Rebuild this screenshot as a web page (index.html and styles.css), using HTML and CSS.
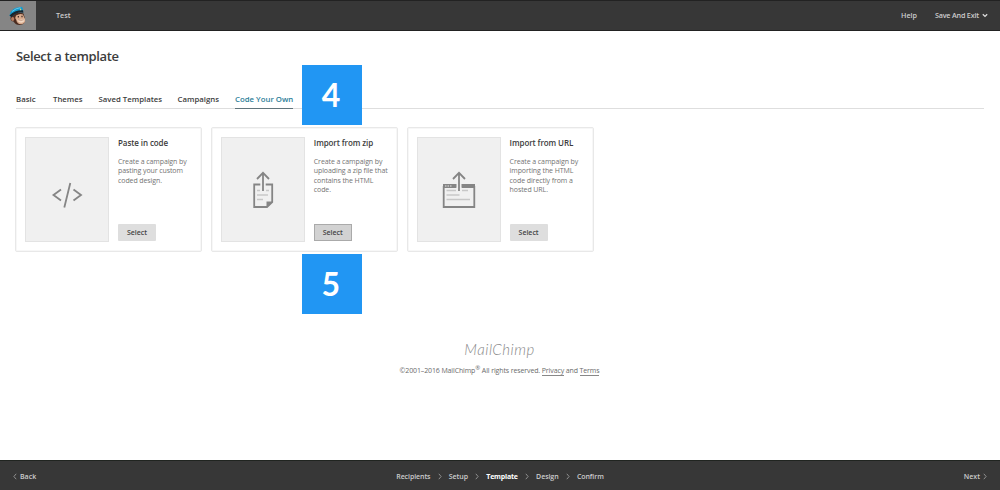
FILE: index.html
```html
<!DOCTYPE html>
<html lang="en">
<head>
<meta charset="utf-8">
<title>Select a template</title>
<link rel="stylesheet" href="styles.css">
</head>
<body>
<div class="app">
  <header class="topbar">
    <a class="logo">
      <svg width="20" height="20" viewBox="0 0 20 20">
        <path d="M4 9 Q2.200 10.500 2.500 13 Q3 15.500 5.500 15.500 Q8 19.600 12.500 19 Q17.500 18 17 12.500 L15.500 7.500 Q10 5.500 4 9Z" fill="#4b2c20"/>
        <path d="M8 9.500 Q12 7 15 8.500 L16.500 12 Q18.500 16.500 14.500 18 Q9 19 8.300 14 Q6.500 11.500 8 9.500Z" fill="#d8aa8c"/>
        <ellipse cx="4.700" cy="13" rx="1.600" ry="1.900" fill="#b57c60"/>
        <path d="M9 13 Q13 15 16.500 12.300 Q17 16.500 13.500 16.800 Q9.800 16.800 9 13Z" fill="#f2d9c4"/>
        <path d="M9.700 13.700 Q13 15.800 16.200 13.500" fill="none" stroke="#a5735c" stroke-width=".5"/>
        <path d="M10.300 10 V11.500 M14 9.700 V11.200" stroke="#2a1b18" stroke-width="1.100"/>
        <path d="M1.500 9.500 Q2.500 4 8 1.800 L14 .8 Q15.700 3 15.200 6.500 Q9.500 4.500 3.500 11Z" fill="#129bd0"/>
        <path d="M1.500 9.500 Q6.500 4 15 4.300 L15.400 6.800 Q8.500 5.500 3.500 11.200Z" fill="#17252e"/>
        <path d="M4 5.500 Q8 2 12.500 1.700" fill="none" stroke="#66c8e8" stroke-width="1"/>
        <path d="M12 2.300 L13.500 3.400 L12 4.500Z" fill="#e5cb68"/>
      </svg>
    </a>
    <span class="campaign">Test</span>
    <nav class="topnav">
      <a class="help">Help</a>
      <a class="save">Save And Exit</a>
      <svg class="caret" width="6" height="5" viewBox="0 0 6 5"><path d="M.8 1.200 L3 3.400 L5.200 1.200" fill="none" stroke="#ddd" stroke-width="1.300"/></svg>
    </nav>
  </header>

  <main class="content">
    <h1 class="title">Select a template</h1>
    <nav class="tabs">
      <a class="tab tab-basic">Basic</a>
      <a class="tab tab-themes">Themes</a>
      <a class="tab tab-saved">Saved Templates</a>
      <a class="tab tab-campaigns">Campaigns</a>
      <a class="tab active">Code Your Own</a>
      <span class="marker marker-four">4</span>
    </nav>

    <section class="cards">
      <article class="card">
        <div class="thumb">
          <svg width="84" height="105" viewBox="0 0 84 105" fill="none" stroke="#858585" stroke-width="1.800">
            <path d="M36 52.500 L28.500 58 L36 63.500 M48.500 52.500 L56 58 L48.500 63.500 M45.300 46 L39.300 70.500"/>
          </svg>
        </div>
        <div class="info">
          <h2 class="name">Paste in code</h2>
          <p class="desc">Create a campaign by<br>pasting your custom<br>coded design.</p>
          <button class="select">Select</button>
        </div>
      </article>
      <article class="card">
        <div class="thumb">
          <svg width="84" height="105" viewBox="0 0 84 105" fill="none" stroke="#858585" stroke-width="1.800">
            <path d="M42 54 V35.800 M36 42 L42 35.800 L48 42 M39.300 47.500 H33.200 V70 H46 L51.200 65 V47.500 H44.700"/>
            <path d="M45.500 70.500 V64.500 H51.700Z" fill="#858585" stroke="none"/>
            <path d="M36 53.500 H39 M45 53.500 H48 M36 58 H47 M36 62.500 H42" stroke="#c7c7c7" stroke-width="1.500"/>
          </svg>
        </div>
        <div class="info">
          <h2 class="name">Import from zip</h2>
          <p class="desc">Create a campaign by<br>uploading a zip file that<br>contains the HTML<br>code.</p>
          <button class="select focused">Select</button>
        </div>
        <span class="marker marker-five">5</span>
      </article>
      <article class="card">
        <div class="thumb">
          <svg width="84" height="105" viewBox="0 0 84 105" fill="none" stroke="#858585" stroke-width="1.800">
            <path d="M42 54 V35.800 M36 42 L42 35.800 L48 42 M39 50 H26.700 V70 H57.300 V50 H45"/>
            <path d="M26 47 H39.500 V50.700 H26Z M44.500 47 H58 V50.700 H44.500Z" fill="#858585" stroke="none"/>
            <path d="M28 49 H34.500" stroke="#e5e5e5" stroke-width="1.200" stroke-dasharray="1.500 1"/>
            <path d="M29.500 53.500 H39 M45 53.500 H51 M29.500 58 H42.500 M29.500 62.500 H53" stroke="#c7c7c7" stroke-width="1.500"/>
          </svg>
        </div>
        <div class="info">
          <h2 class="name">Import from URL</h2>
          <p class="desc">Create a campaign by<br>importing the HTML<br>code directly from a<br>hosted URL.</p>
          <button class="select">Select</button>
        </div>
      </article>
    </section>

    <footer class="legal">
      <div class="wordmark">MailChimp</div>
      <div class="copyright">©2001–2016 MailChimp<sup>®</sup> All rights reserved. <a>Privacy</a> and <a>Terms</a></div>
    </footer>
  </main>

  <footer class="wizard">
    <a class="back"><svg width="4" height="7" viewBox="0 0 4 7"><path d="M3.200 .8 L.9 3.500 L3.200 6.200"/></svg>Back</a>
    <div class="steps">
      <span>Recipients</span><svg width="4" height="7" viewBox="0 0 4 7"><path d="M.8 .8 L3.100 3.500 L.8 6.200"/></svg>
      <span>Setup</span><svg width="4" height="7" viewBox="0 0 4 7"><path d="M.8 .8 L3.100 3.500 L.8 6.200"/></svg>
      <span class="current">Template</span><svg width="4" height="7" viewBox="0 0 4 7"><path d="M.8 .8 L3.100 3.500 L.8 6.200"/></svg>
      <span>Design</span><svg width="4" height="7" viewBox="0 0 4 7"><path d="M.8 .8 L3.100 3.500 L.8 6.200"/></svg>
      <span>Confirm</span>
    </div>
    <a class="next">Next<svg width="4" height="7" viewBox="0 0 4 7"><path d="M.8 .8 L3.100 3.500 L.8 6.200"/></svg></a>
  </footer>
</div>
</body>
</html>
```
FILE: styles.css
```css
* { box-sizing: border-box; }
body { margin: 0; background: #fff; font-family: "Open Sans", sans-serif; color: #3c3c3c; }
svg { display: block; flex: none; }
.app { width: 1000px; height: 490px; display: flex; flex-direction: column; overflow: hidden; }

.topbar { height: 31px; flex: none; display: flex; align-items: center; background: #373737; border-top: 1px solid #222; border-bottom: 1px solid #222; font-size: 7.200px; line-height: 11px; font-weight: 600; color: #ccc; white-space: nowrap; }
.logo { width: 36px; height: 29px; display: flex; align-items: center; justify-content: center; background: #858585; }
.campaign { margin-left: 20px; }
.topnav { margin-left: auto; display: flex; align-items: center; padding-right: 12px; }
.help { width: 34px; }
.save { width: 47px; letter-spacing: -.2px; }

.content { flex: 1; padding: 0 16px 0 15px; display: flex; flex-direction: column; }
.title { margin: 16px 0 0 1px; font-size: 13px; line-height: 18px; font-weight: 600; letter-spacing: -.35px; }
.tabs { position: relative; height: 17px; margin-top: 27px; margin-left: 1px; display: flex; border-bottom: 1px solid #dedede; font-size: 7.800px; font-weight: 600; line-height: 15px; white-space: nowrap; }
.tab { height: 17px; }
.tab-basic { width: 37px; }
.tab-themes { width: 45.500px; }
.tab-saved { width: 79px; }
.tab-campaigns { width: 57.500px; }
.active { color: #2c7e99; border-bottom: 1px solid #60747b; }
.marker { position: absolute; width: 60px; height: 60px; padding-right: 2px; background: #2196f3; color: #fff; font: 700 32px/60px Lato, sans-serif; text-align: center; }
.marker-four { left: 286px; top: -27px; }
.marker-five { left: 90px; top: 126px; }

.cards { display: flex; gap: 8.800px; margin-top: 18px; }
.card { position: relative; width: 187px; height: 125px; padding: 9px; display: flex; gap: 9px; border: 1px solid #e8e8e8; border-radius: 2px; box-shadow: inset 0 0 0 1px #f7f7f7; }
.thumb { width: 84px; height: 105px; flex: none; background: #f0f0f0; box-shadow: inset 0 0 0 1px #e3e3e3; }
.info { display: flex; flex-direction: column; align-items: flex-start; white-space: nowrap; }
.name { margin: 0; font-size: 8px; font-weight: 600; line-height: 11px; letter-spacing: -.09px; }
.desc { margin: 9px 0 0; font-size: 7px; line-height: 9.300px; letter-spacing: -.09px; color: #737373; }
.select { width: 38px; height: 17px; margin: auto 0 1px; padding: 0; border: 0; border-radius: 1px; background: #dedede; color: #444; font: 600 7px/17px "Open Sans", sans-serif; }
.focused { border: 1px solid #aaa; background: #d2d2d2; line-height: 15px; border-radius: 0; }

.legal { margin-top: 86px; text-align: center; color: #6b6b6b; }
.wordmark { font: italic 300 15px/22px Lato, cursive; letter-spacing: .5px; color: #888; }
.copyright { margin-top: 5px; font-size: 7px; line-height: 12px; letter-spacing: -.12px; }
.copyright sup { font-size: 6px; line-height: 0; }
.copyright a { border-bottom: 1px solid #888; }

.wizard { height: 30px; flex: none; padding: 1px 13px 0; display: flex; align-items: center; justify-content: space-between; position: relative; border-top: 1px solid #202420; background: #373737; color: #ccc; font-size: 7px; font-weight: 600; }
.wizard path { fill: none; stroke: #999; stroke-width: .9; }
.back, .next { display: flex; align-items: center; gap: 3px; }
.steps { display: flex; align-items: center; gap: 7.200px; letter-spacing: -.07px; }
.current { color: #fff; font-weight: 700; letter-spacing: -.2px; }
```
